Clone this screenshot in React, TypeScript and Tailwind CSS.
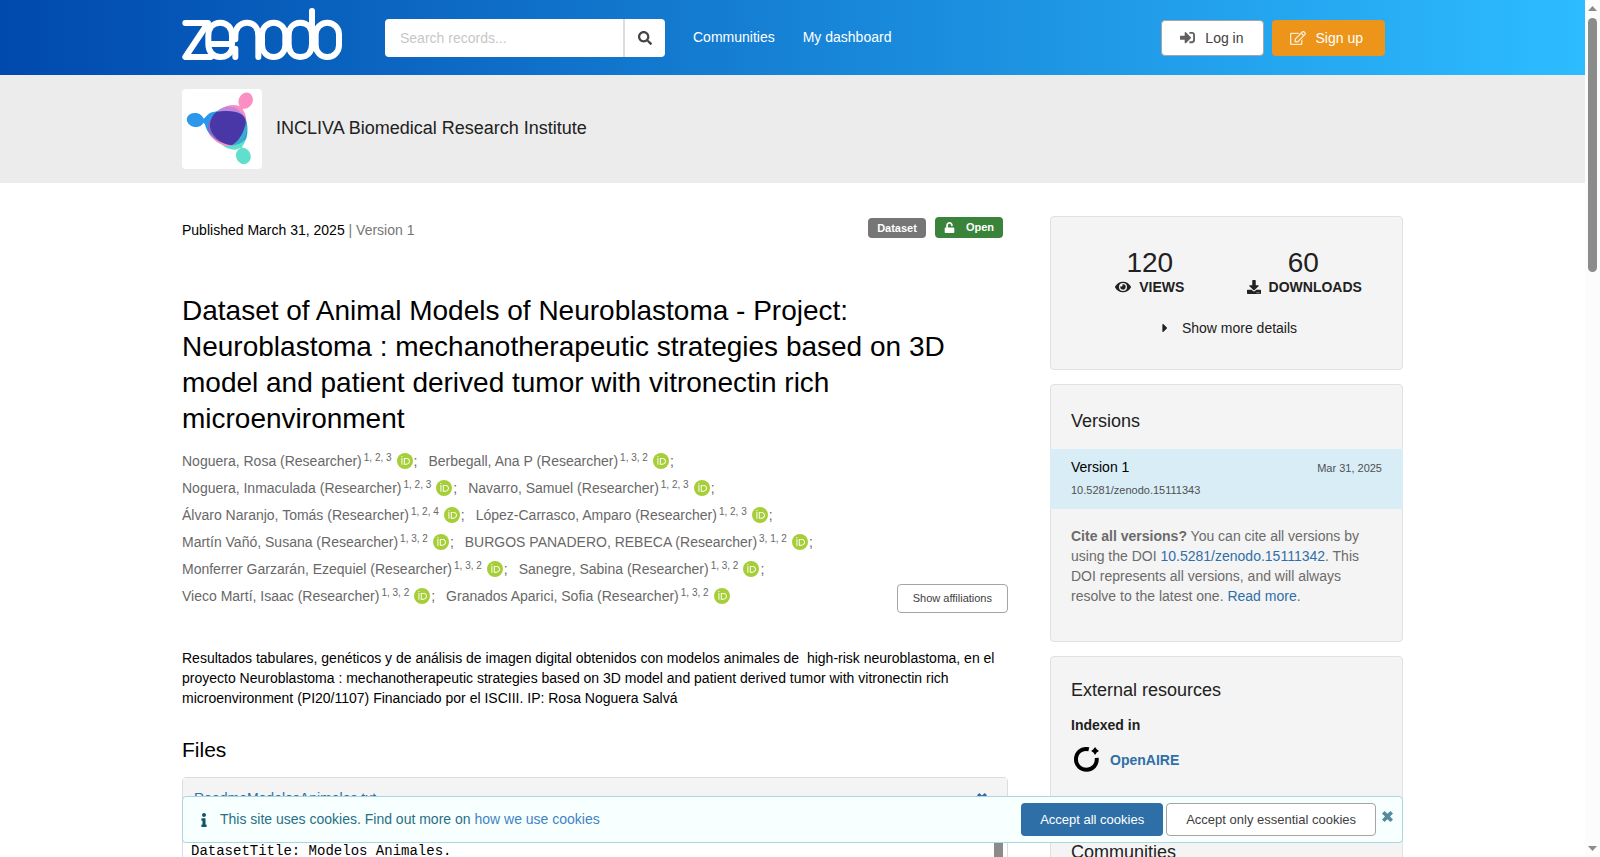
import React from "react";
import {
  FaCaretRight,
  FaDownload,
  FaEye,
  FaInfo,
  FaRegEdit,
  FaSearch,
  FaSignInAlt,
  FaUnlock,
} from "react-icons/fa";

type Author = { name: string; refs: string };

const authors: Author[] = [
  { name: "Noguera, Rosa", refs: "1, 2, 3" },
  { name: "Berbegall, Ana P", refs: "1, 3, 2" },
  { name: "Noguera, Inmaculada", refs: "1, 2, 3" },
  { name: "Navarro, Samuel", refs: "1, 2, 3" },
  { name: "Álvaro Naranjo, Tomás", refs: "1, 2, 4" },
  { name: "López-Carrasco, Amparo", refs: "1, 2, 3" },
  { name: "Martín Vañó, Susana", refs: "1, 3, 2" },
  { name: "BURGOS PANADERO, REBECA", refs: "3, 1, 2" },
  { name: "Monferrer Garzarán, Ezequiel", refs: "1, 3, 2" },
  { name: "Sanegre, Sabina", refs: "1, 3, 2" },
  { name: "Vieco Martí, Isaac", refs: "1, 3, 2" },
  { name: "Granados Aparici, Sofia", refs: "1, 3, 2" },
];

function ZenodoLogo() {
  return (
    <svg viewBox="0 0 480 156" className="h-[52px] w-[160px]" fill="none" stroke="#fff" strokeWidth="18" strokeLinecap="round" strokeLinejoin="round" aria-hidden="true">
      <path d="M10 45H78L10 147H86" />
      <path d="M82 108H150V84C150 60 136 44 115 44C93 44 79 60 79 84V108C79 131 93 147 115 147C133 147 144 138 150 124" />
      <path d="M150 122H160V147" />
      <path d="M160 94V84C160 60 174 44 195 44C216 44 229 60 229 84V147" />
      <rect x="240" y="44" width="70" height="103" rx="35" />
      <path d="M390 9V108C390 131 377 147 355 147C333 147 320 131 320 108V84C320 60 333 44 355 44C377 44 390 60 390 84" />
      <rect x="401" y="44" width="70" height="103" rx="35" />
    </svg>
  );
}

function InstituteLogo() {
  return (
    <svg viewBox="0 0 240 240" className="size-20 rounded bg-white" aria-hidden="true">
      <g fill="#61dfcd">
        <ellipse cx="184" cy="201" rx="22" ry="25" transform="rotate(-20 184 201)" />
        <path d="M180 178C180 168 196 156 196 132C197 90 160 50 122 56C98 64 82 92 86 118C92 142 112 164 126 172C142 184 164 184 172 178Z" />
      </g>
      <g fill="#fb8fc2">
        <ellipse cx="191" cy="35" rx="21" ry="25" transform="rotate(25 191 35)" />
        <path d="M182 56C182 64 193 74 193 94C194 126 184 158 152 171C118 174 88 150 80 132C80 104 92 78 114 62C130 50 152 44 172 51Z" />
      </g>
      <g fill="#2b98ec">
        <ellipse cx="40" cy="93" rx="26" ry="21" transform="rotate(10 40 93)" />
        <path d="M62 90C72 88 74 70 98 68C130 60 164 62 180 74C198 90 200 126 192 148C176 172 136 172 116 160C90 144 76 132 70 110C68 104 66 102 60 100Z" />
      </g>
      <path d="M104 71C128 44 160 50 176 70C184 76 192 84 192 98L180 80Z" fill="#c287dc" />
      <path d="M88 86C74 106 74 126 90 142C108 162 130 172 150 170L110 150Z" fill="#7d6cc8" />
      <path d="M82 132C96 158 124 174 150 171L128 164C106 158 94 146 82 132Z" fill="#fb8fc2" />
      <path d="M192 100C200 124 190 156 172 164L148 170L182 136Z" fill="#3dadcb" />
      <path d="M104 69C128 64 162 65 178 76C192 86 194 100 188 114C180 140 166 160 150 168C132 168 110 158 98 142C84 126 80 108 88 90C92 80 96 73 104 69Z" fill="#4936a7" />
    </svg>
  );
}

function OrcidIcon() {
  return (
    <svg viewBox="0 0 256 256" className="ml-[5px] size-4 shrink-0" role="img" aria-label="ORCID">
      <circle cx="128" cy="128" r="128" fill="#a6ce39" />
      <g fill="#fff">
        <path d="M86.3 186.2H70.9V79.1h15.4v107.1z" />
        <path d="M108.9 79.1h41.6c39.6 0 57 28.3 57 53.6 0 27.5-21.5 53.6-56.8 53.6h-41.8V79.1zm15.4 93.3h24.5c34.9 0 42.9-26.5 42.9-39.7 0-21.5-13.7-39.7-43.7-39.7h-23.7v79.4z" />
        <circle cx="78.6" cy="56.8" r="10.1" />
      </g>
    </svg>
  );
}

function OpenAireIcon() {
  return (
    <svg viewBox="0 0 76 76" className="size-[25px]" aria-hidden="true">
      <path d="M45 7C22 2 6 17 6 38C6 56 20 69 38 69C57 69 71 54 69 33" fill="none" stroke="#000" strokeWidth="12" />
      <path d="M64 0L69 7L76 12L69 17L64 24L59 17L52 12L59 7Z" fill="#000" />
    </svg>
  );
}

function CrossIcon({ className = "" }: { className?: string }) {
  return (
    <svg viewBox="0 0 22 22" className={className} fill="currentColor" aria-hidden="true">
      <path d="M5 0L11 5.5L17 0L22 5L16 11L22 17L17 22L11 16.500L5 22L0 17L6 11L0 5Z" />
    </svg>
  );
}

function Header() {
  return (
    <header className="bg-[linear-gradient(90deg,#0049ad,#2dbcff)]">
      <div className="mx-auto flex h-[75px] max-w-[1221px] items-center">
        <a href="#home" aria-label="Zenodo home" className="mb-2">
          <ZenodoLogo />
        </a>
        <form className="ml-[43px] flex h-[38px] overflow-hidden rounded bg-white" onSubmit={(e) => e.preventDefault()}>
          <input
            type="search"
            aria-label="Search records"
            placeholder="Search records..."
            className="w-[238px] px-[15px] text-sm outline-none placeholder:text-[#c7c7c7]"
          />
          <button aria-label="Search" className="flex w-[42px] items-center justify-center border-l-2 border-[#dcdcdc] text-[#444]">
            <FaSearch size={14} />
          </button>
        </form>
        <nav className="ml-7 flex gap-7 pb-[2px] text-white">
          <a href="#communities">Communities</a>
          <a href="#dashboard">My dashboard</a>
        </nav>
        <div className="mr-[18px] ml-auto flex gap-2">
          <button className="flex h-9 items-center gap-[10px] rounded border border-[#a5a5a5] bg-white px-[18px] text-[#404040]">
            <FaSignInAlt size={15} className="text-[#606060]" />
            <span className="pr-[1px]">Log in</span>
          </button>
          <button className="flex h-9 items-center gap-[10px] rounded bg-[#ec951a] pr-[22px] pl-[18px] text-white">
            <FaRegEdit size={16} className="opacity-80" />
            Sign up
          </button>
        </div>
      </div>
    </header>
  );
}

function Card({ children, className = "" }: { children: React.ReactNode; className?: string }) {
  return <section className={"rounded border border-[#e1e1e1] bg-[#f4f4f4] text-[#212121] " + className}>{children}</section>;
}

function RecordMain() {
  return (
    <main className="min-w-0 flex-1 text-black">
      <div className="flex items-start justify-between pr-[5px]">
        <p className="pt-1">
          Published March 31, 2025 <span className="text-[#767676]">| Version 1</span>
        </p>
        <div className="flex items-end gap-[9px] pt-[1px] text-[11px] leading-5 font-bold text-white">
          <span className="rounded bg-[#767676] px-[9px]">Dataset</span>
          <span className="flex items-center gap-[11px] rounded bg-[#3a833b] px-[9px] leading-[21px]">
            <FaUnlock size={11} />
            Open
          </span>
        </div>
      </div>
      <h1 className="mt-[53px] text-[28px] leading-9">
        Dataset of Animal Models of Neuroblastoma - Project: Neuroblastoma : mechanotherapeutic strategies based on 3D
        model and patient derived tumor with vitronectin rich microenvironment
      </h1>
      <div className="mt-[10px] flex items-end justify-between gap-4">
        <ul className="flex flex-1 flex-wrap gap-x-[11px] text-[#686868]">
          {authors.map((a, i) => (
            <li key={a.name} className="flex h-[27px] items-center">
              <a href="#author">
                {a.name} (Researcher)
                <sup className="ml-[2px] text-[10px]">{a.refs}</sup>
              </a>
              <OrcidIcon />
              {i < authors.length - 1 && <span className="pl-[1px]">;</span>}
            </li>
          ))}
        </ul>
        <button className="-mb-1 h-[29px] rounded border border-[#a5a5a5] px-[15px] pb-[2px] text-[11px] text-[#404040]">
          Show affiliations
        </button>
      </div>
      <p className="mt-[39px]">
        Resultados tabulares, genéticos y de análisis de imagen digital obtenidos con modelos animales de &nbsp;high-risk
        neuroblastoma, en el proyecto Neuroblastoma : mechanotherapeutic strategies based on 3D model and patient derived
        tumor with vitronectin rich microenvironment (PI20/1107) Financiado por el ISCIII. IP: Rosa Noguera Salvá
      </p>
      <h2 className="mt-7 text-[21px] leading-7">Files</h2>
      <div className="mt-[13px] rounded border border-[#dcdcdc]">
        <div className="flex h-10 items-center justify-between bg-[#f4f4f4] pr-5 pl-[11px] text-[#2f6fa7]">
          <a href="#file">ReadmeModelosAnimales.txt</a>
          <button aria-label="Close preview">
            <CrossIcon className="size-[10px]" />
          </button>
        </div>
        <div className="flex h-60 items-stretch justify-between pt-[23px] pr-1 pl-2">
          <pre className="font-['Liberation_Mono',monospace] text-sm leading-5">DatasetTitle: Modelos Animales.</pre>
          <div className="w-[9px] bg-[#8b8b8b]" />
        </div>
      </div>
    </main>
  );
}

function Sidebar() {
  return (
    <aside className="flex w-[353px] shrink-0 flex-col gap-[14px]">
      <Card className="px-[22px] pt-8 pb-[31px]">
        <dl className="grid grid-cols-2 text-center">
          <div className="flex flex-col-reverse">
            <dt className="flex items-center justify-center gap-2 font-bold">
              <FaEye size={16} />
              VIEWS
            </dt>
            <dd className="text-[28px] leading-7">120</dd>
          </div>
          <div className="flex flex-col-reverse">
            <dt className="flex items-center justify-center gap-2 pl-[2px] font-bold">
              <FaDownload size={14} />
              DOWNLOADS
            </dt>
            <dd className="text-[28px] leading-7">60</dd>
          </div>
        </dl>
        <button className="mx-auto mt-[21px] flex items-center gap-[10px] pl-[2px]">
          <FaCaretRight size={14} />
          Show more details
        </button>
      </Card>
      <Card>
        <h2 className="px-5 pt-6 pb-4 text-lg leading-6">Versions</h2>
        <div className="-mx-px h-[60px] bg-[#d9edf7] px-[21px] pt-2">
          <div className="flex items-start justify-between">
            <span className="text-black">Version 1</span>
            <time className="pt-[1px] text-[11px] text-[#505050]">Mar 31, 2025</time>
          </div>
          <p className="pt-[2px] text-[11px] text-[#505050]">10.5281/zenodo.15111343</p>
        </div>
        <p className="px-5 pt-[17px] pb-[35px] text-[#6b6b6b]">
          <strong>Cite all versions?</strong> You can cite all versions by using the DOI{" "}
          <a href="#doi" className="text-[#2f6fa7]">10.5281/zenodo.15111342</a>. This DOI represents all versions, and will
          always resolve to the latest one. <a href="#help" className="text-[#2f6fa7]">Read more</a>.
        </p>
      </Card>
      <Card className="px-5 pt-[21px] pb-[31px]">
        <h2 className="text-lg leading-6">External resources</h2>
        <h3 className="mt-[13px] font-bold">Indexed in</h3>
        <a href="#openaire" className="mt-3 flex items-center gap-[11px] pl-[3px] font-bold text-[#2f6fa7]">
          <OpenAireIcon />
          OpenAIRE
        </a>
      </Card>
      <Card className="px-5 pt-[21px] pb-10">
        <h2 className="text-lg leading-6">Communities</h2>
      </Card>
    </aside>
  );
}

function CookieBanner() {
  return (
    <div className="absolute inset-x-0 bottom-[14px] px-4">
      <div role="dialog" aria-label="Cookies" className="mx-auto flex h-[47px] max-w-[1221px] items-center rounded border border-[#a9d5de] bg-[#f8ffff] pr-[9px] pl-[14px] text-[#276f86]">
        <FaInfo size={14} className="text-[#0e566c]" />
        <p className="ml-[9px] pb-[2px]">
          This site uses cookies. Find out more on <a href="#cookies" className="text-[#4183c4]">how we use cookies</a>
        </p>
        <button className="ml-auto h-[33px] rounded bg-[#2f6fa7] px-[19px] text-[13px] text-white">Accept all cookies</button>
        <button className="ml-[3px] h-[33px] rounded border border-[#a5a5a5] bg-white px-[19px] text-[13px] text-[#404040]">
          Accept only essential cookies
        </button>
        <button aria-label="Dismiss" className="ml-[6px] pb-[6px] text-[#528c9e]">
          <CrossIcon className="size-[11px]" />
        </button>
      </div>
    </div>
  );
}

function Scrollbar() {
  return (
    <div className="flex w-[15px] shrink-0 flex-col items-center bg-[#fcfcfc] py-[6px]" aria-hidden="true">
      <svg viewBox="0 0 9 5" className="h-[5px] w-[9px]">
        <path d="M0 5L4.5 0L9 5Z" fill="#8b8b8b" />
      </svg>
      <div className="mt-[7px] h-[30%] w-[9px] rounded-full bg-[#8b8b8b]" />
      <svg viewBox="0 0 9 5" className="mt-auto h-[5px] w-[9px]">
        <path d="M0 0L4.5 5L9 0Z" fill="#8b8b8b" />
      </svg>
    </div>
  );
}

export default function App() {
  return (
    <div className="relative flex h-screen overflow-hidden bg-white font-['Liberation_Sans',Arial,sans-serif] text-sm leading-5">
      <div className="relative min-w-0 flex-1 overflow-hidden">
        <Header />
        <div className="bg-[#ececec]">
          <div className="mx-auto flex max-w-[1221px] items-center gap-[14px] py-[14px] text-lg text-[#212121]">
            <InstituteLogo />
            <a href="#community" className="pb-[2px]">INCLIVA Biomedical Research Institute</a>
          </div>
        </div>
        <div className="mx-auto flex max-w-[1221px] gap-[42px] pt-[33px]">
          <RecordMain />
          <Sidebar />
        </div>
        <CookieBanner />
      </div>
      <Scrollbar />
    </div>
  );
}
